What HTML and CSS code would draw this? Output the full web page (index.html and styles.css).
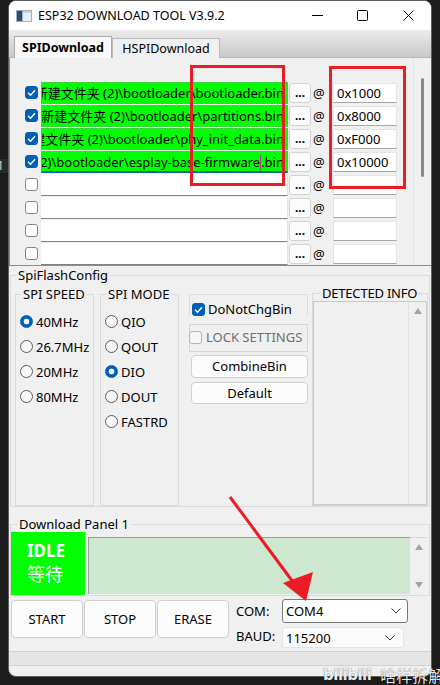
FILE: index.html
```html
<!DOCTYPE html>
<html lang="zh-CN">
<head>
<meta charset="utf-8">
<title>ESP32 DOWNLOAD TOOL V3.9.2</title>
<link rel="stylesheet" href="styles.css">
</head>
<body>
<div class="desk-line">1</div>

<div class="window">
  <div class="titlebar">
    <svg class="app-icon" width="16" height="12" viewBox="0 0 16 12">
      <rect x="0" y="0" width="16" height="12" fill="#9fb0c2"/>
      <rect x="1" y="1" width="5" height="10" fill="#2f4f6f"/>
      <rect x="7" y="1" width="8" height="10" fill="#e9eef3"/>
      <rect x="7" y="1" width="8" height="2" fill="#c4d2e0"/>
    </svg>
    <span class="title">ESP32 DOWNLOAD TOOL V3.9.2</span>
    <div class="controls">
      <div class="ctl"><svg width="11" height="11" viewBox="0 0 11 11"><line x1="0" y1="5.5" x2="11" y2="5.5" stroke="#000" stroke-width="1"/></svg></div>
      <div class="ctl"><svg width="11" height="11" viewBox="0 0 11 11"><rect x="0.5" y="0.5" width="10" height="10" rx="1" fill="none" stroke="#000" stroke-width="1"/></svg></div>
      <div class="ctl"><svg width="11" height="11" viewBox="0 0 11 11"><path d="M0.5 0.5 L10.5 10.5 M10.5 0.5 L0.5 10.5" stroke="#000" stroke-width="1"/></svg></div>
    </div>
  </div>

  <div class="tabstrip">
    <div class="tab active">SPIDownload</div>
    <div class="tab">HSPIDownload</div>
  </div>

  <div class="filelist">
    <div class="rows">
      <div class="row">
        <span class="cb on"><svg viewBox="0 0 13 13"><polyline points="3,6.8 5.5,9.2 10,4.2"/></svg></span>
        <div class="field green"><span>D:\新建文件夹 (2)\bootloader\bootloader.bin</span></div>
        <span class="browse">...</span><span class="at">@</span>
        <div class="addr">0x1000</div>
      </div>
      <div class="row">
        <span class="cb on"><svg viewBox="0 0 13 13"><polyline points="3,6.8 5.5,9.2 10,4.2"/></svg></span>
        <div class="field green"><span>D:\新建文件夹 (2)\bootloader\partitions.bin</span></div>
        <span class="browse">...</span><span class="at">@</span>
        <div class="addr">0x8000</div>
      </div>
      <div class="row">
        <span class="cb on"><svg viewBox="0 0 13 13"><polyline points="3,6.8 5.5,9.2 10,4.2"/></svg></span>
        <div class="field green"><span>D:\新建文件夹 (2)\bootloader\phy_init_data.bin</span></div>
        <span class="browse">...</span><span class="at">@</span>
        <div class="addr">0xF000</div>
      </div>
      <div class="row">
        <span class="cb on"><svg viewBox="0 0 13 13"><polyline points="3,6.8 5.5,9.2 10,4.2"/></svg></span>
        <div class="field green focus"><span>D:\新建文件夹 (2)\bootloader\esplay-base-firmware<i class="caret"></i>.bin</span></div>
        <span class="browse">...</span><span class="at">@</span>
        <div class="addr">0x10000</div>
      </div>
      <div class="row">
        <span class="cb"></span>
        <div class="field"></div>
        <span class="browse">...</span><span class="at">@</span>
        <div class="addr"></div>
      </div>
      <div class="row">
        <span class="cb"></span>
        <div class="field"></div>
        <span class="browse">...</span><span class="at">@</span>
        <div class="addr"></div>
      </div>
      <div class="row">
        <span class="cb"></span>
        <div class="field"></div>
        <span class="browse">...</span><span class="at">@</span>
        <div class="addr"></div>
      </div>
      <div class="row">
        <span class="cb"></span>
        <div class="field"></div>
        <span class="browse">...</span><span class="at">@</span>
        <div class="addr"></div>
      </div>
    </div>
    <div class="vscroll"><div class="thumb"></div></div>
  </div>

  <fieldset class="grp spiflash">
    <legend>SpiFlashConfig</legend>
    <div class="cfg-body">
      <fieldset class="grp sub">
        <legend>SPI SPEED</legend>
        <div class="opts">
          <label class="opt"><span class="radio on"></span>40MHz</label>
          <label class="opt"><span class="radio"></span>26.7MHz</label>
          <label class="opt"><span class="radio"></span>20MHz</label>
          <label class="opt"><span class="radio"></span>80MHz</label>
        </div>
      </fieldset>
      <fieldset class="grp sub mode">
        <legend>SPI MODE</legend>
        <div class="opts">
          <label class="opt"><span class="radio"></span>QIO</label>
          <label class="opt"><span class="radio"></span>QOUT</label>
          <label class="opt"><span class="radio on"></span>DIO</label>
          <label class="opt"><span class="radio"></span>DOUT</label>
          <label class="opt"><span class="radio"></span>FASTRD</label>
        </div>
      </fieldset>
      <div class="middle">
        <div class="dnc">
          <span class="cb on"><svg viewBox="0 0 13 13"><polyline points="3,6.8 5.5,9.2 10,4.2"/></svg></span>
          <span class="dnc-label">DoNotChgBin</span>
        </div>
        <div class="lock">
          <span class="cb off"></span>
          <span class="lock-label">LOCK SETTINGS</span>
        </div>
        <div class="btn combine">CombineBin</div>
        <div class="btn dflt">Default</div>
      </div>
      <fieldset class="grp detected">
        <legend>DETECTED INFO</legend>
        <div class="info">
          <div class="info-scroll"><span class="arr up"></span></div>
        </div>
      </fieldset>
    </div>
  </fieldset>

  <fieldset class="grp dlpanel">
    <legend>Download Panel 1</legend>
    <div class="dl-body">
      <div class="state"><span class="state-en">IDLE</span><span class="state-cn">等待</span></div>
      <div class="log"></div>
      <div class="log-scroll"><span class="arr up"></span><span class="arr down"></span></div>
    </div>
  </fieldset>

  <div class="actions">
    <div class="btn big">START</div>
    <div class="btn big">STOP</div>
    <div class="btn big">ERASE</div>
    <div class="port">
      <span class="plabel">COM:</span>
      <div class="select com">COM4<svg width="10" height="6" viewBox="0 0 10 6"><polyline points="0.5,0.5 5,5 9.5,0.5" fill="none" stroke="#333" stroke-width="1"/></svg></div>
      <span class="plabel">BAUD:</span>
      <div class="select baud">115200<svg width="10" height="6" viewBox="0 0 10 6"><polyline points="0.5,0.5 5,5 9.5,0.5" fill="none" stroke="#333" stroke-width="1"/></svg></div>
    </div>
  </div>

  <div class="statusbar"></div>
</div>

<svg class="marks" width="440" height="685" viewBox="0 0 440 685">
  <rect x="191.5" y="66.5" width="92" height="118" fill="none" stroke="#ec1c24" stroke-width="3"/>
  <rect x="330.5" y="67.5" width="74" height="120" fill="none" stroke="#ec1c24" stroke-width="3"/>
  <line x1="230" y1="497" x2="296" y2="586" stroke="#ec1c24" stroke-width="3"/>
  <polygon points="306,601 283,583 313,572" fill="#ec1c24"/>
</svg>

<div class="watermark"><span class="bili">bilibili</span><span class="wm-cn">啥样拆解</span></div>
</body>
</html>
```

FILE: styles.css
```css
* { box-sizing: border-box; }

html, body { margin: 0; }

body {
  width: 440px;
  height: 685px;
  overflow: hidden;
  position: relative;
  background: #1c1c1c;
  font-family: "Noto Sans", "Noto Sans CJK SC", sans-serif;
  font-size: 13px;
  color: #000;
}

/* sliver of another window behind this one */
.desk-line {
  position: absolute;
  left: 0;
  top: 159px;
  width: 8px;
  height: 14px;
  background: #2a2a2a;
  color: #d6d6d6;
  font-size: 12px;
  line-height: 14px;
  text-indent: -3px;
  overflow: hidden;
}

.window {
  margin-left: 8px;
  width: 424px;
  height: 677px;
  border: 1px solid #5e5e5e;
  border-radius: 8px;
  background: #f0f0f0;
  overflow: hidden;
  display: flex;
  flex-direction: column;
}

/* ---- title bar ---- */
.titlebar {
  height: 29px;
  flex-shrink: 0;
  background: #fff;
  display: flex;
  align-items: center;
}
.app-icon { margin-left: 7px; flex-shrink: 0; }
.title { margin-left: 6px; font-size: 12.5px; white-space: nowrap; }
.controls { margin-left: auto; display: flex; height: 100%; }
.ctl { width: 45.5px; display: flex; align-items: center; justify-content: center; }

/* ---- tabs ---- */
.tabstrip {
  height: 28px;
  flex-shrink: 0;
  background: linear-gradient(#ececec, #c8c8c8);
  display: flex;
  align-items: flex-end;
  padding-left: 5px;
  border-bottom: 1px solid #b8b8b8;
}
.tab {
  width: 108px;
  height: 20px;
  margin-bottom: -1px;
  border: 1px solid #bcbcbc;
  border-bottom: none;
  background: #f0f0f0;
  text-align: center;
  line-height: 19px;
  font-size: 12.5px;
  white-space: nowrap;
}
.tab.active {
  width: 98px;
  height: 22px;
  background: #f8f8f8;
  border-color: #a9a9a9;
  font-weight: bold;
  line-height: 21px;
}

/* ---- file list ---- */
.filelist {
  height: 208px;
  flex-shrink: 0;
  display: flex;
  border-left: 1px solid #8c8c8c;
  border-bottom: 1px solid #8c8c8c;
}
.rows { flex: 1; padding: 23px 0 0 15px; overflow: hidden; }
.row { height: 23px; display: flex; align-items: center; }

.cb {
  width: 13px;
  height: 13px;
  flex-shrink: 0;
  border: 1px solid #858585;
  border-radius: 3px;
  background: #fff;
}
.cb svg { display: block; width: 13px; height: 13px; margin: -1px; }
.cb polyline { fill: none; stroke: #fff; stroke-width: 1.3; }
.cb.on { background: #005fb8; border-color: #005fb8; }
.cb.off { background: #f6f6f6; border-color: #b4b4b4; }

.field {
  margin-left: 3px;
  width: 247px;
  height: 22px;
  flex-shrink: 0;
  display: flex;
  justify-content: flex-end;
  align-items: center;
  overflow: hidden;
  padding-right: 3px;
  background: #fff;
  border-right: 1px solid #e3e3e3;
  border-bottom: 1px solid #838383;
  white-space: nowrap;
}
.field span { flex-shrink: 0; }
.field.green {
  background: #00ff00;
  border: 1px solid #3ed23e;
}
.field.focus { border-bottom: 2px solid #0a5fc0; }
.caret {
  display: inline-block;
  width: 1px;
  height: 15px;
  vertical-align: -3px;
  background: #c0309a;
}

.browse {
  margin-left: 1px;
  width: 22px;
  height: 20px;
  flex-shrink: 0;
  border: 1px solid #d3d3d3;
  border-radius: 3px;
  background: #fbfbfb;
  text-align: center;
  line-height: 17px;
  font-weight: bold;
  font-size: 12px;
}
.at { margin-left: 2px; width: 11px; flex-shrink: 0; font-size: 13px; }
.addr {
  margin-left: 9px;
  width: 64px;
  height: 20px;
  flex-shrink: 0;
  padding-left: 3px;
  line-height: 19px;
  background: #fff;
  border: 1px solid #e4e4e4;
  border-bottom-color: #a8a8a8;
}

.vscroll {
  width: 18px;
  flex-shrink: 0;
  border-left: 1px solid #e4e4e4;
  padding: 20px 0 0 7px;
}
.thumb { width: 3px; height: 99px; border-radius: 2px; background: #8a8a8a; }

/* ---- group boxes ---- */
fieldset { margin: 0; min-width: 0; }
.grp { border: 1px solid #d9d9d9; padding: 0; }
.grp > legend { padding: 0 2px; line-height: 18px; white-space: nowrap; }

.spiflash {
  margin: 0 1px;
  padding-left: 4px;
  height: 241px;
  flex-shrink: 0;
}
.spiflash > legend { margin-left: 1px; }
.cfg-body { display: flex; align-items: flex-start; margin-top: 1px; }

.sub { width: 79px; height: 221px; padding-left: 4px; flex-shrink: 0; }
.sub > legend { margin-left: 1px; }
.sub.mode { margin-left: 6px; }
.opts { padding-top: 6px; }
.opt { height: 25px; display: flex; align-items: center; white-space: nowrap; }
.radio {
  width: 13px;
  height: 13px;
  margin-right: 3px;
  flex-shrink: 0;
  border: 1px solid #5c5c5c;
  border-radius: 50%;
  background: #f7f7f7;
}
.radio.on {
  border-color: #005fb8;
  background: radial-gradient(circle, #fff 0 2.6px, #005fb8 3.2px);
}

.middle { margin-left: 10px; width: 119px; flex-shrink: 0; }
.dnc {
  margin-top: 9px;
  height: 22px;
  padding: 8px 0 0 2px;
  border: 1px solid #dcdcdc;
  border-bottom: none;
  display: flex;
  align-items: flex-start;
}
.dnc-label { margin-left: 3px; line-height: 14px; margin-top: -1px; }
.lock {
  margin-top: 8px;
  height: 28px;
  border: 1px solid #d6d6d6;
  padding-top: 6px;
  display: flex;
  align-items: flex-start;
}
.lock .cb { margin-left: -1px; }
.lock-label { margin-left: 4px; color: #6e6e6e; line-height: 14px; margin-top: -1px; }

.btn {
  border: 1px solid #d0d0d0;
  border-radius: 4px;
  background: #fcfcfc;
  text-align: center;
  white-space: nowrap;
}
.combine { margin: 3px 0 0 2px; height: 23px; line-height: 21px; }
.dflt { margin: 4px 0 0 2px; height: 22px; line-height: 20px; }

.detected { margin-left: 4px; width: 116px; height: 221px; flex-shrink: 0; }
.detected > legend { margin-left: 8px; padding: 0 1px; line-height: 16px; letter-spacing: -0.2px; }
.info {
  height: 204px;
  background: #f0f0f0;
  border: 1px solid #c9c9c9;
  display: flex;
  justify-content: flex-end;
}
.info-scroll {
  width: 18px;
  border-left: 1px solid #e2e2e2;
  display: flex;
  flex-direction: column;
  align-items: center;
  padding-top: 6px;
}

.arr { width: 0; height: 0; border-left: 4px solid transparent; border-right: 4px solid transparent; }
.arr.up { border-bottom: 6px solid #a3a3a3; }
.arr.down { border-top: 6px solid #a3a3a3; }

/* ---- download panel ---- */
.dlpanel {
  margin: 9px 1px 0;
  height: 80px;
  flex-shrink: 0;
}
.dlpanel > legend { margin-left: 6px; line-height: 16px; }
.dl-body { display: flex; align-items: flex-start; }
.state {
  width: 74px;
  height: 63px;
  flex-shrink: 0;
  background: #00ff00;
  color: #fff;
  padding: 9px 0 0 16px;
  display: flex;
  flex-direction: column;
  align-items: flex-start;
}
.state-en { font-size: 17px; font-weight: bold; line-height: 20px; }
.state-cn { font-family: "Noto Sans CJK SC", sans-serif; font-size: 18px; line-height: 22px; margin-top: 1px; }
.log {
  margin: 5px 0 0 3px;
  width: 322px;
  height: 57px;
  flex-shrink: 0;
  background: #cde8cf;
  border-top: 1px solid #9c9c9c;
  border-left: 1px solid #9c9c9c;
}
.log-scroll {
  margin-top: 5px;
  width: 17px;
  height: 57px;
  flex-shrink: 0;
  border-top: 1px solid #d8d8d8;
  display: flex;
  flex-direction: column;
  align-items: center;
  justify-content: space-between;
  padding: 6px 0 6px;
}

/* ---- bottom controls ---- */
.actions { margin-top: 3px; padding-left: 2px; display: flex; align-items: flex-start; flex-shrink: 0; }
.btn.big { width: 72px; height: 38px; line-height: 36px; margin: 1px 1px 0 0; }
.port {
  margin-left: 6px;
  display: grid;
  grid-template-columns: 46px auto;
  align-items: center;
}
.plabel { white-space: nowrap; }
.select {
  display: flex;
  align-items: center;
  justify-content: space-between;
  padding: 0 6px 0 3px;
  white-space: nowrap;
}
.select.com {
  width: 126px;
  height: 24px;
  border: 1px solid #7a7a7a;
  border-radius: 3px;
  background: #fff;
}
.select.baud {
  margin-top: 4px;
  width: 122px;
  height: 21px;
  border: 1px solid #e3e3e3;
  border-radius: 3px;
  background: #fbfbfb;
  padding-right: 8px;
}

.statusbar {
  margin-top: 3px;
  height: 15px;
  flex-shrink: 0;
  background: #e5e5e5;
  border-top: 1px solid #d2d2d2;
  border-bottom: 1px solid #d2d2d2;
}

/* ---- annotations drawn over the window ---- */
.marks { position: absolute; left: 0; top: 0; pointer-events: none; }

.watermark {
  position: absolute;
  left: 323px;
  top: 665px;
  display: flex;
  align-items: center;
  white-space: nowrap;
  color: rgba(255, 255, 255, 0.92);
  text-shadow: 0 0 1px rgba(0, 0, 0, 0.7);
}
.bili { font-family: "DejaVu Sans", sans-serif; font-weight: bold; font-size: 15px; letter-spacing: -0.5px; }
.wm-cn { margin-left: 9px; font-family: "Noto Sans CJK SC", sans-serif; font-size: 16px; line-height: 20px; }
```
